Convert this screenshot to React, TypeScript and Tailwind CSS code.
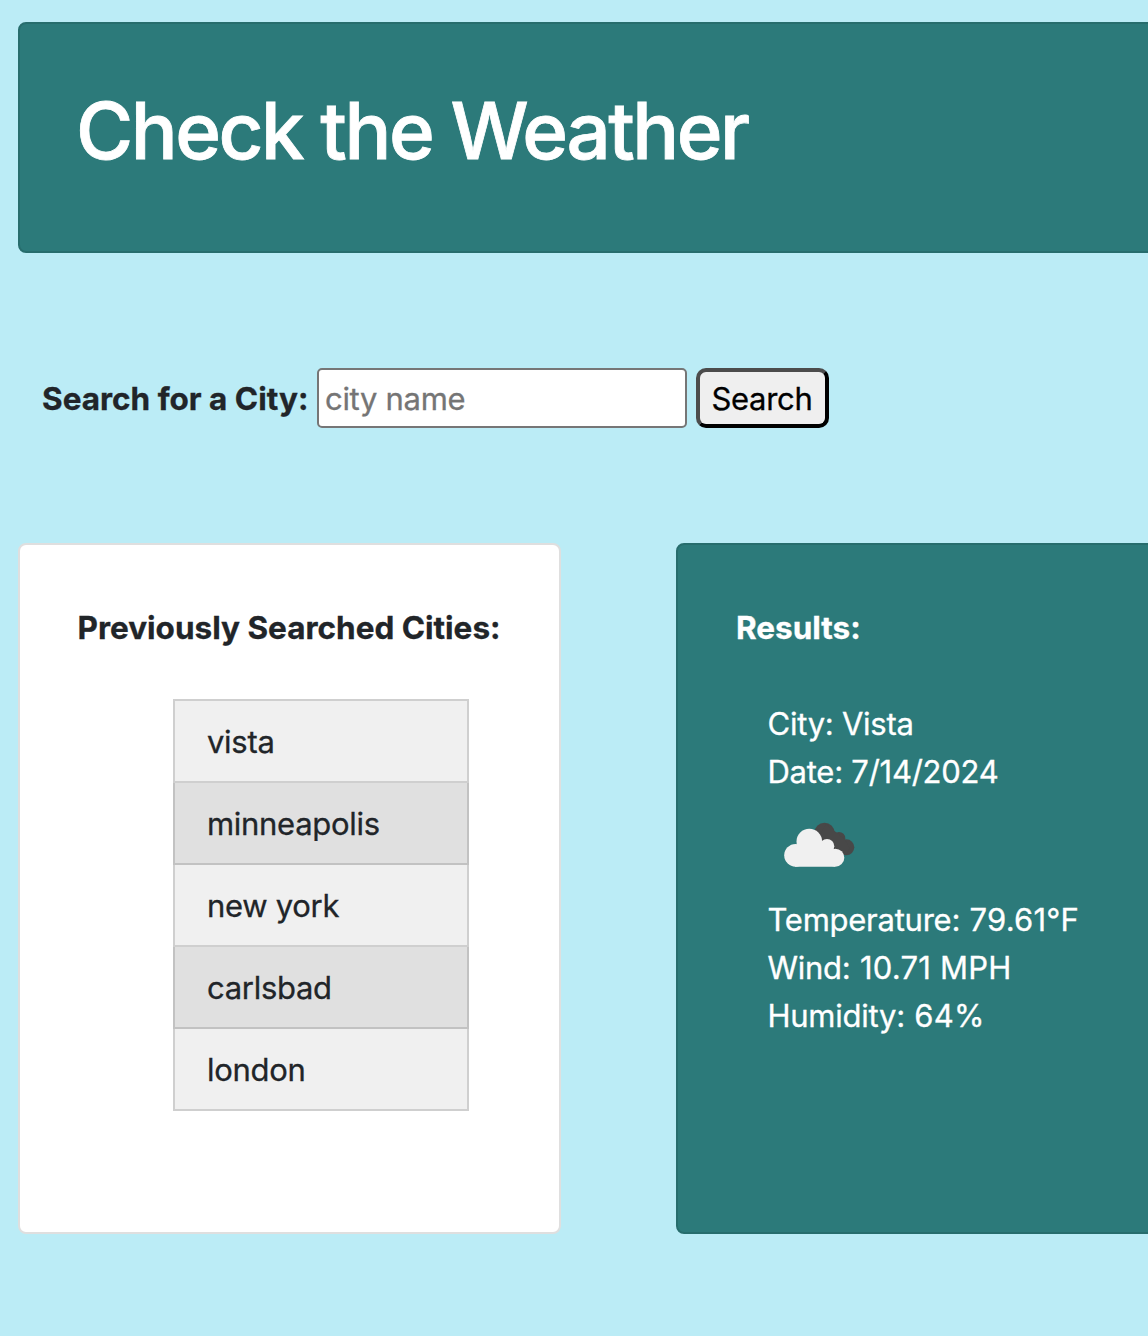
const cities = ['vista', 'minneapolis', 'new york', 'carlsbad', 'london'];

const readings = [
  { label: 'Temperature:', value: '79.61°F' },
  { label: 'Wind:', value: '10.71 MPH' },
  { label: 'Humidity:', value: '64%' },
];

function CloudIcon() {
  return (
    <svg width="100" height="100" viewBox="0 0 100 100" className="block">
      <g fill="#484848">
        <circle cx="56.5" cy="37" r="10.2" />
        <circle cx="71" cy="42.3" r="6.3" />
        <circle cx="78.3" cy="51.3" r="8" />
        <path d="M50 42L58 28L66 34.5L77 43.4L82 52L78 59.3L68 57z" />
      </g>
      <g fill="#f0f0f0">
        <circle cx="27.6" cy="59.3" r="11.4" />
        <circle cx="41.3" cy="45.6" r="12.8" />
        <circle cx="59" cy="50.2" r="7.3" />
        <circle cx="67.3" cy="61.7" r="9" />
        <path d="M27 70.7L67 70.7L67 54L59 50L41 45L30 50z" />
      </g>
    </svg>
  );
}

export default function App() {
  return (
    <div className="h-[1336px] w-[1148px] overflow-hidden bg-[#bbecf6] pl-[18px] pt-[22px] font-['Inter','Liberation_Sans',sans-serif] text-[31px] leading-[48px] tracking-[-0.3px] text-[#212529] [-webkit-text-stroke:0.3px_currentColor]">
      <header className="h-[231px] w-[1200px] rounded-[8px] border-2 border-[#276d6d] bg-[#2c7a7a] pl-[56px] pt-[59px]">
        <h1 className="whitespace-nowrap text-[78px] font-medium leading-[96px] tracking-[-2.5px] text-white [-webkit-text-stroke:0.8px_white]">
          Check the Weather
        </h1>
      </header>

      <form className="mt-[115px] flex h-[60px] items-center pl-6" onSubmit={(e) => e.preventDefault()}>
        <label htmlFor="city" className="w-[275px] whitespace-nowrap pt-0.5 text-[31.5px] font-bold tracking-[0px]">
          Search for a City:
        </label>
        <input
          id="city"
          placeholder="city name"
          className="h-[60px] w-[370px] rounded-[5px] border-2 border-[#767676] bg-white px-[6px] tracking-[-0.3px] placeholder:text-[#757575]"
        />
        <button className="ml-[9px] h-[60px] w-[133px] whitespace-nowrap rounded-[10px] border-4 border-t-[#4c4c4c] border-l-[#4c4c4c] border-r-black border-b-black bg-[#efefef] pr-px pt-0.5 text-center leading-[50px] tracking-[-0.3px] text-black">
          Search
        </button>
      </form>

      <main className="mt-[115px] flex items-start">
        <section className="h-[691px] w-[543px] shrink-0 rounded-[8px] border-2 border-[#dfdfdf] bg-white pl-[57.5px] pt-[59px]">
          <h2 className="whitespace-nowrap text-[31.5px] font-bold tracking-[0px]">Previously Searched Cities:</h2>
          <ul className="ml-[95.5px] mt-[47px] w-[296px]">
            {cities.map((city) => (
              <li
                key={city}
                className="h-[82px] border-x-2 border-b-2 border-[#cfcfcf] bg-[#f0f0f0] pl-8 pt-[17px] first:h-[84px] first:border-t-2 even:border-[#c2c2c2] even:bg-[#e0e0e0]"
              >
                {city}
              </li>
            ))}
          </ul>
        </section>

        <section className="ml-[115px] h-[691px] w-[600px] shrink-0 rounded-[8px] border-2 border-[#276d6d] bg-[#2c7a7a] pl-[58px] pt-[59px] text-white">
          <h2 className="text-[31.5px] font-bold tracking-[0px]">Results:</h2>
          <div className="ml-[31.5px] mt-[48px] whitespace-nowrap tracking-[-0.25px]">
            <p>City: Vista</p>
            <p>Date: 7/14/2024</p>
            <CloudIcon />
            {readings.map(({ label, value }) => (
              <p key={label}>
                {label} <span className="ml-px tracking-[0.2px]">{value}</span>
              </p>
            ))}
          </div>
        </section>
      </main>
    </div>
  );
}
